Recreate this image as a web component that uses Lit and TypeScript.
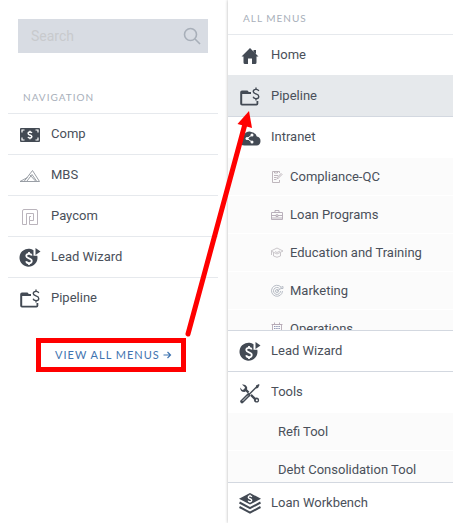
import { LitElement, html, css, svg, nothing, type TemplateResult } from "lit";
import { customElement, property } from "lit/decorators.js";

const DARK = "#434a54";

const dollar = (x: number, y: number, s: number, color: string, w: number) => svg`
  <g transform="translate(${x} ${y}) scale(${s})" fill="none" stroke=${color} stroke-width=${w / s}>
    <path d="M3 -3.2C2.6 -4.4 1.5 -5 0 -5C-1.8 -5 -3 -4.1 -3 -2.6C-3 0.4 3 -0.6 3 2.6C3 4.1 1.8 5 0 5C-1.7 5 -2.8 4.3 -3.1 3M0 -7V-5M0 5V7"/>
  </g>`;

const icons: Record<string, TemplateResult> = {
  cash: html`<svg viewBox="0 0 22 22" width="22" height="22">
    <rect x="1" y="4" width="20" height="14" rx="1" fill=${DARK} />
    <path d="M3 8.500V6H5.500M16.500 6H19V8.500M19 13.500V16H16.500M5.500 16H3V13.500" fill="none" stroke="#fff" stroke-width="1.200" />
    ${dollar(11, 11, 0.62, "#fff", 1.5)}
  </svg>`,
  peaks: html`<svg viewBox="0 0 22 22" width="22" height="22">
    <path d="M1 16.500H20.500L13.500 5.500L5 16.500M1 16.500L8.500 12.500M8 16L13 9.500L17.500 16M10.500 9.500L16.500 16" fill="none" stroke="#8f949c" stroke-width="0.900" />
  </svg>`,
  paycom: html`<svg viewBox="0 0 22 22" width="22" height="22">
    <path d="M3.500 18.500V5Q3.500 3.500 5 3.500H17Q18.500 3.500 18.500 5V18.500H10.500V14.500H14.500V7.500H7.500V18.500ZM10.500 14.500V10.500H12" fill="none" stroke="#b2abb4" stroke-width="0.900" />
  </svg>`,
  lead: html`<svg viewBox="0 0 22 22" width="22" height="22">
    <path d="M14.500 3.200A9 9 0 1 0 18.300 8.800L14.500 8.800Z" fill=${DARK} />
    <path d="M16.500 1L21.500 4.500L16.500 8Z" fill=${DARK} />
    ${dollar(10, 11.5, 0.92, "#fff", 1.8)}
  </svg>`,
  folder: html`<svg viewBox="0 0 22 22" width="22" height="22">
    <path d="M12 6H9.800L8.500 4.500H3Q1.200 4.500 1.200 6.300V17.700Q1.200 19.500 3 19.500H17.500Q19.300 19.500 19.300 17.700V15H17.500V17.700H3.200V8H12Z" fill=${DARK} />
    ${dollar(17, 8, 0.92, DARK, 1.4)}
  </svg>`,
  home: html`<svg viewBox="0 0 22 22" width="22" height="22">
    <path d="M11 3L19.500 11.500H17.500V17.500Q17.500 19 16 19H13V13.500H9V19H6Q4.500 19 4.500 17.500V11.500H2.500Z" fill=${DARK} />
    <path d="M14.500 5H17V9L14.500 7Z" fill=${DARK} />
  </svg>`,
  cloud: html`<svg viewBox="0 0 22 22" width="22" height="22">
    <path d="M5.500 18.500A5 5 0 0 1 4.500 8.600A7.200 7.200 0 0 1 17.800 9.600A4.500 4.500 0 0 1 17.500 18.500Z" fill=${DARK} />
    <path d="M13 8L8 11.500L13 15" fill="none" stroke="#fff" stroke-width="1" />
    <circle cx="13" cy="8" r="1.500" fill="#fff" /><circle cx="8" cy="11.500" r="1.500" fill="#fff" /><circle cx="13" cy="15" r="1.500" fill="#fff" />
  </svg>`,
  tools: html`<svg viewBox="0 0 22 22" width="22" height="22">
    <path d="M6 7L17.500 18.500" stroke=${DARK} stroke-width="2.400" />
    <path d="M3 2.500L6 5.300L5.200 7.300L3.200 8L1.200 5.500Q1.200 10 5.500 10L8 8.500L8.200 5.500Q7 2 3 2.500Z" fill=${DARK} />
    <circle cx="17.500" cy="18" r="2.600" fill=${DARK} /><circle cx="17.800" cy="18.300" r="1" fill="#fff" />
    <path d="M17.500 5L9.500 13" stroke="#fff" stroke-width="3.200" />
    <path d="M18.500 4L9.500 13" stroke=${DARK} stroke-width="1.500" />
    <path d="M17 3.500L20 2L20.500 3L19 6L17 6.500Z" fill=${DARK} />
    <path d="M9.500 13L3 19.500" stroke=${DARK} stroke-width="3.600" stroke-linecap="round" />
    <path d="M9 13.500L3.500 19" stroke="#fff" stroke-width="0.800" />
  </svg>`,
  layers: html`<svg viewBox="0 0 22 22" width="22" height="22">
    <path d="M11 0L22 5.800L11 11.600L0 5.800Z" fill=${DARK} />
    <path d="M0.500 9.500L11 15.200L21.500 9.500M0.500 14L11 19.700L21.500 14" fill="none" stroke=${DARK} stroke-width="2" />
    ${dollar(11, 5.8, 0.58, "#fff", 1.4)}
  </svg>`,
  checklist: html`<svg viewBox="0 0 14 14" width="14" height="14">
    <path d="M9.500 3V1.500H2.500V12.500H9.500V10M4.500 1.500V3H7.500V1.500M4 5.500H8M4 7.500H6.500M4 9.500H6.500M7.500 9L12 4.500L11 3.500L7 7.800Z" fill="none" stroke="#b8afb6" stroke-width="0.900" />
  </svg>`,
  briefcase: html`<svg viewBox="0 0 14 14" width="14" height="14">
    <path d="M1.500 4.500H12.500V11.500H1.500ZM5 4.500V2.500H9V4.500M1.500 7.500H6M8 7.500H12.500M6 6.800H8V8.500H6ZM1.500 10H12.500" fill="none" stroke="#b2a8b4" stroke-width="0.900" />
  </svg>`,
  cap: html`<svg viewBox="0 0 14 14" width="14" height="14">
    <path d="M1 5L7 2L13 5L7 8ZM3.500 6.500V10Q7 12.500 10.500 10V6.500M1.500 5.500V9M5 5.500L7 6.500L10 5" fill="none" stroke="#bdb9be" stroke-width="0.800" />
  </svg>`,
  target: html`<svg viewBox="0 0 14 14" width="14" height="14">
    <g fill="none" stroke="#b0b6c0" stroke-width="0.900">
      <path d="M11 3A5.500 5.500 0 1 0 12.500 7M9.500 4.500A3.500 3.500 0 1 0 10.500 7" />
      <circle cx="7" cy="7" r="1.500" /><path d="M7 7L11 4.500H13V2.500L10.500 3.500" />
    </g>
  </svg>`,
  building: html`<svg viewBox="0 0 14 14" width="14" height="14">
    <path d="M2.500 12V2.500H11.500V12M1.500 2.500H12.500M4.500 2V0.500M9.500 2V0.500M1.500 12.500H12.500" fill="none" stroke="#b4a8b4" stroke-width="0.900" />
    <path d="M4 4.500H10M4 6.500H10M4 8.500H10" stroke="#9298b4" stroke-width="1" stroke-dasharray="1.500 0.700" />
  </svg>`,
};

interface MenuEntry {
  label: string;
  icon?: string;
  active?: boolean;
  children?: MenuEntry[];
}

const shortcuts: MenuEntry[] = [
  { label: "Comp", icon: "cash" },
  { label: "MBS", icon: "peaks" },
  { label: "Paycom", icon: "paycom" },
  { label: "Lead Wizard", icon: "lead" },
  { label: "Pipeline", icon: "folder" },
];

const allMenus: MenuEntry[] = [
  { label: "Home", icon: "home" },
  { label: "Pipeline", icon: "folder", active: true },
  {
    label: "Intranet",
    icon: "cloud",
    children: [
      { label: "Compliance-QC", icon: "checklist" },
      { label: "Loan Programs", icon: "briefcase" },
      { label: "Education and Training", icon: "cap" },
      { label: "Marketing", icon: "target" },
      { label: "Operations", icon: "building" },
    ],
  },
  { label: "Lead Wizard", icon: "lead" },
  {
    label: "Tools",
    icon: "tools",
    children: [{ label: "Refi Tool" }, { label: "Debt Consolidation Tool" }],
  },
  { label: "Loan Workbench", icon: "layers" },
];

@customElement("menu-list")
export class MenuList extends LitElement {
  @property({ attribute: false }) entries: MenuEntry[] = [];

  static styles = css`
    :host { display: block; }
    ul { list-style: none; margin: 0; padding: 0; }
    a { color: #4a505a; text-decoration: none; display: flex; align-items: center; }
    svg { display: block; overflow: visible; }
    .item { border-bottom: 1px solid var(--menu-line, #e6e9ed); }
    .item:last-child { border-bottom: 0; }
    .link { height: 40px; padding-left: 11px; }
    .icon { width: 22px; flex: none; padding-top: 2px; margin-right: 10px; }
    .active { background: #e6e9ec; }
    .item:has(+ .active) { border-color: #e6e9ec; }
    .sub { background: #fbfbfb; overflow: hidden; border-top: 1px solid #fff; }
    .sub-item + .sub-item { border-top: 1px solid #fff; }
    .sub-link { height: 37px; padding-left: 50px; }
    .sub-item .icon { width: 14px; padding: 0; margin: 0 6px 0 -8px; }
    .intranet { max-height: 172px; }
    .tools { max-height: 69px; }
  `;

  private renderChildren(entry: MenuEntry) {
    return html`<ul class="sub ${entry.label.toLowerCase()}">
      ${entry.children!.map(
        (c) => html`<li class="sub-item">
          <a class="sub-link" href="#">${c.icon ? html`<span class="icon" aria-hidden="true">${icons[c.icon]}</span>` : nothing}${c.label}</a>
        </li>`
      )}
    </ul>`;
  }

  render() {
    return html`<ul>
      ${this.entries.map(
        (e) => html`<li class="item ${e.active ? "active" : ""}">
          <a class="link" href="#"><span class="icon" aria-hidden="true">${icons[e.icon!]}</span>${e.label}</a>
          ${e.children ? this.renderChildren(e) : nothing}
        </li>`
      )}
    </ul>`;
  }
}

@customElement("app-root")
export class AppRoot extends LitElement {
  static styles = css`
    :host {
      display: grid;
      grid-template-columns: 228px 1fr;
      position: relative;
      overflow: hidden;
      min-height: 100vh;
      background: #fff;
      color: #434a54;
      font: 13px/20px Roboto, "Liberation Sans", sans-serif;
    }
    .side { padding: 19px 10px 0 8px; }
    .search { display: flex; align-items: center; height: 34px; margin: 0 10px; background: #d8dce3; }
    .search input {
      flex: 1; min-width: 0; height: 34px; padding: 0 0 0 13px; border: 0; background: none;
      font: 14px/20px Roboto, sans-serif; color: #434a54; outline: 0;
    }
    .search input::placeholder { color: #c8cacd; opacity: 1; }
    .search button { border: 0; background: none; padding: 0 7px; height: 34px; }
    .search svg { display: block; }
    .title {
      margin: 0; font: 400 10px/12px Lato, "Open Sans", sans-serif; letter-spacing: 1px;
      color: #a8afba; border-bottom: 1px solid #e6e9ed; text-transform: uppercase;
    }
    .side .title { padding: 38px 0 10px 15px; }
    .panel .title { padding: 12px 0 10px 15px; }
    .view-all {
      display: flex; align-items: center; box-sizing: border-box;
      width: 150px; height: 34px; margin: 20px 0 0 28px; padding-left: 14px;
      border: 5px solid #f00; color: #3f74b0; text-decoration: none;
      font: 11px/14px Lato, "Open Sans", sans-serif; letter-spacing: 1px; white-space: nowrap;
    }
    .view-all svg { margin-left: 3px; }
    .panel { --menu-line: #d3d8e0; box-shadow: 0 0 3px rgba(0, 0, 0, 0.3); }
    .pointer { position: absolute; left: 180px; top: 108px; pointer-events: none; }
  `;

  render() {
    return html`
      <aside class="side">
        <form class="search" role="search">
          <input type="search" placeholder="Search" aria-label="Search" />
          <button type="button" aria-label="Submit search">
            <svg viewBox="0 0 18 18" width="18" height="18" fill="none" stroke="#a8afb9" stroke-width="1.600">
              <circle cx="7.500" cy="7.500" r="6" /><path d="M12 12L17 17" />
            </svg>
          </button>
        </form>
        <nav aria-label="Navigation">
          <h2 class="title">Navigation</h2>
          <menu-list .entries=${shortcuts}></menu-list>
        </nav>
        <a class="view-all" href="#">VIEW ALL MENUS
          <svg viewBox="0 0 9 8" width="9" height="8" fill="none" stroke="#3f74b0" stroke-width="1.200" aria-hidden="true">
            <path d="M0.500 4H7.500M4.500 1L7.500 4L4.500 7" />
          </svg>
        </a>
      </aside>
      <nav class="panel" aria-label="All menus">
        <h2 class="title">All menus</h2>
        <menu-list .entries=${allMenus}></menu-list>
      </nav>
      <svg class="pointer" viewBox="180 108 80 232" width="80" height="232" aria-hidden="true">
        <path d="M188 334L245 124" stroke="#f00" stroke-width="5" stroke-linecap="round" />
        <path d="M249 111L252 128L237.500 124Z" fill="#f00" />
      </svg>
    `;
  }
}
